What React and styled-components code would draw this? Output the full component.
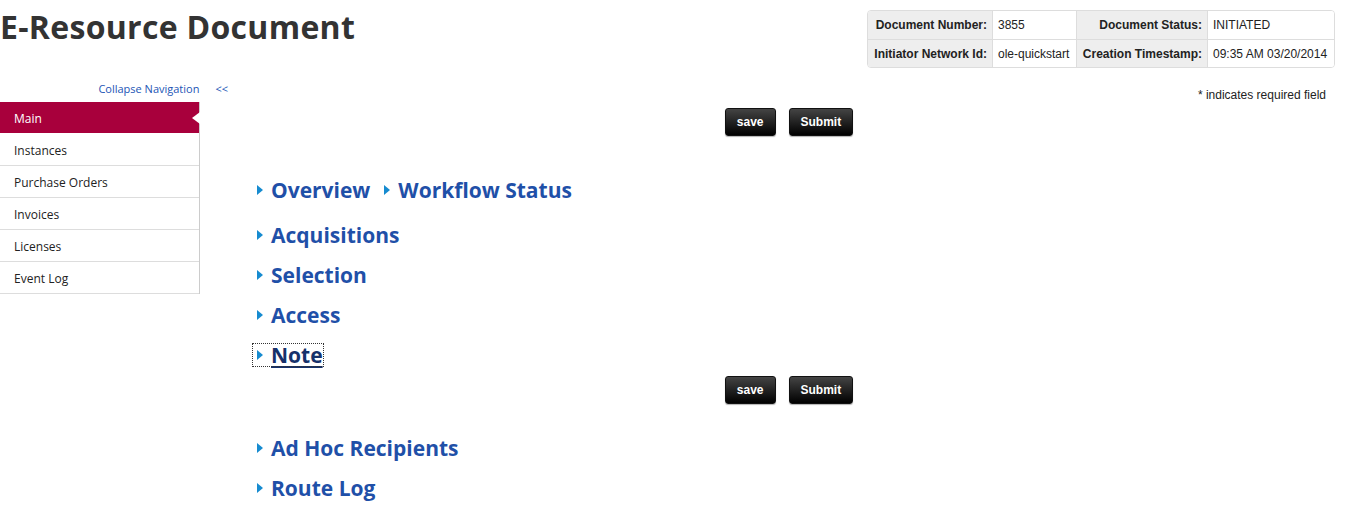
import React from "react";
import styled, { createGlobalStyle } from "styled-components";

const GlobalStyle = createGlobalStyle`
  body {
    margin: 0;
    background: #fff;
    font-family: "Open Sans", "Liberation Sans", sans-serif;
    color: #333;
  }
`;

const Page = styled.div`
  width: 1352px;
  height: 508px;
  overflow: hidden;
`;

const Header = styled.div`
  display: flex;
  justify-content: space-between;
  align-items: flex-start;
  height: 78px;
`;

const Title = styled.h1`
  margin: 0;
  padding-top: 6px;
  font-size: 32px;
  line-height: 42px;
  font-weight: 700;
  color: #333;
  letter-spacing: 0.3px;
`;

const InfoTable = styled.table`
  margin: 10px 17px 0 0;
  border-collapse: separate;
  border-spacing: 0;
  border: 1px solid #ddd;
  border-radius: 4px;
  overflow: hidden;
  table-layout: fixed;
  width: 466px;
  font-family: "Liberation Sans", Arial, sans-serif;
  font-size: 12px;
  color: #222;
`;

const Cell = styled.td`
  height: 28px;
  padding: 0 5px;
  white-space: nowrap;
  overflow: hidden;
  text-align: ${(p) => (p.$label ? "right" : "left")};
  font-weight: ${(p) => (p.$label ? 700 : 400)};
  background: ${(p) => (p.$label ? "#eee" : "#fff")};
  border-left: ${(p) => (p.$first ? "none" : "1px solid #ddd")};
  border-top: ${(p) => (p.$top ? "none" : "1px solid #ddd")};
  width: ${(p) => p.$w}px;
  box-sizing: border-box;
`;

const Body = styled.div`
  display: flex;
`;

const LeftCol = styled.div`
  width: 228px;
  flex-shrink: 0;
`;

const CollapseRow = styled.div`
  height: 24px;
  box-sizing: border-box;
  padding-bottom: 4px;
  display: flex;
  justify-content: flex-end;
  align-items: center;
  gap: 16px;
  font-size: 11px;
  color: #2255b5;
`;

const Nav = styled.ul`
  list-style: none;
  margin: 0;
  padding: 0;
  width: 199px;
  border-right: 1px solid #ccc;
`;

const NavItem = styled.li`
  position: relative;
  height: 32px;
  box-sizing: border-box;
  border-bottom: 1px solid #ddd;
  padding: 2px 0 0 14px;
  display: flex;
  align-items: center;
  font-size: 12px;
  color: ${(p) => (p.$active ? "#fff" : "#222")};
  background: ${(p) => (p.$active ? "#a8003c" : "#fff")};
  border-bottom-color: ${(p) => (p.$active ? "#fff" : "#ddd")};

  &::after {
    content: "";
    display: ${(p) => (p.$active ? "block" : "none")};
    position: absolute;
    right: -1px;
    top: 10px;
    border-style: solid;
    border-width: 6px 8px 6px 0;
    border-color: transparent #fff transparent transparent;
  }
`;

const Main = styled.div`
  flex: 1;
`;

const Required = styled.div`
  margin-top: 10px;
  padding-right: 26px;
  text-align: right;
  font-family: "Liberation Sans", Arial, sans-serif;
  font-size: 12px;
  line-height: 14px;
  color: #222;
`;

const ButtonBar = styled.div`
  display: flex;
  justify-content: center;
  gap: 13px;
  padding-right: 2px;
  margin-top: ${(p) => p.$top}px;
  margin-bottom: ${(p) => p.$bottom}px;
`;

const Button = styled.button`
  height: 28px;
  padding: 0 11px;
  border: 1px solid #111;
  border-radius: 3px;
  background: linear-gradient(#444, #000);
  box-shadow: 0 1px 1px rgba(0, 0, 0, 0.3);
  color: #fff;
  font-family: "Liberation Sans", Arial, sans-serif;
  font-size: 12px;
  font-weight: 700;
`;

const Sections = styled.div`
  padding-left: 25px;
`;

const SectionRow = styled.div`
  height: 40px;
  display: flex;
  align-items: center;
  gap: 10px;
  margin-bottom: ${(p) => p.$gap || 0}px;
`;

const SectionLink = styled.a`
  display: inline-flex;
  align-items: center;
  height: 22px;
  padding: 0 0 0 4px;
  font-size: 21px;
  font-weight: 700;
  letter-spacing: 0;
  color: ${(p) => (p.$focused ? "#16316a" : "#1f50a8")};
  text-decoration: ${(p) => (p.$focused ? "underline" : "none")};
  text-underline-offset: 3px;
  outline: ${(p) => (p.$focused ? "1px dotted #333" : "none")};
  outline-offset: 0;
`;

const Arrow = styled.span`
  width: 0;
  height: 0;
  border-style: solid;
  border-width: 5px 0 5px 6px;
  border-color: transparent transparent transparent #168bd0;
  margin-right: 8px;
`;

const Section = ({ label, focused }) => (
  <SectionLink $focused={focused}>
    <Arrow />
    {label}
  </SectionLink>
);

const Buttons = ({ top, bottom }) => (
  <ButtonBar $top={top} $bottom={bottom}>
    <Button>save</Button>
    <Button>Submit</Button>
  </ButtonBar>
);

const navItems = ["Main", "Instances", "Purchase Orders", "Invoices", "Licenses", "Event Log"];

export default function App() {
  return (
    <Page>
      <GlobalStyle />
      <Header>
        <Title>E-Resource Document</Title>
        <InfoTable>
          <tbody>
            <tr>
              <Cell $label $first $top $w={124}>Document Number:</Cell>
              <Cell $top $w={84}>3855</Cell>
              <Cell $label $top $w={131}>Document Status:</Cell>
              <Cell $top $w={127}>INITIATED</Cell>
            </tr>
            <tr>
              <Cell $label $first $w={124}>Initiator Network Id:</Cell>
              <Cell $w={84}>ole-quickstart</Cell>
              <Cell $label $w={131}>Creation Timestamp:</Cell>
              <Cell $w={127}>09:35 AM 03/20/2014</Cell>
            </tr>
          </tbody>
        </InfoTable>
      </Header>
      <Body>
        <LeftCol>
          <CollapseRow>
            <span>Collapse Navigation</span>
            <span>&lt;&lt;</span>
          </CollapseRow>
          <Nav>
            {navItems.map((item, i) => (
              <NavItem key={item} $active={i === 0}>
                {item}
              </NavItem>
            ))}
          </Nav>
        </LeftCol>
        <Main>
          <Required>* indicates required field</Required>
          <Buttons top={6} bottom={34} />
          <Sections>
            <SectionRow $gap={5}>
              <Section label="Overview" />
              <Section label="Workflow Status" />
            </SectionRow>
            <SectionRow>
              <Section label="Acquisitions" />
            </SectionRow>
            <SectionRow>
              <Section label="Selection" />
            </SectionRow>
            <SectionRow>
              <Section label="Access" />
            </SectionRow>
            <SectionRow>
              <Section label="Note" focused />
            </SectionRow>
          </Sections>
          <Buttons top={1} bottom={24} />
          <Sections>
            <SectionRow>
              <Section label="Ad Hoc Recipients" />
            </SectionRow>
            <SectionRow>
              <Section label="Route Log" />
            </SectionRow>
          </Sections>
        </Main>
      </Body>
    </Page>
  );
}
